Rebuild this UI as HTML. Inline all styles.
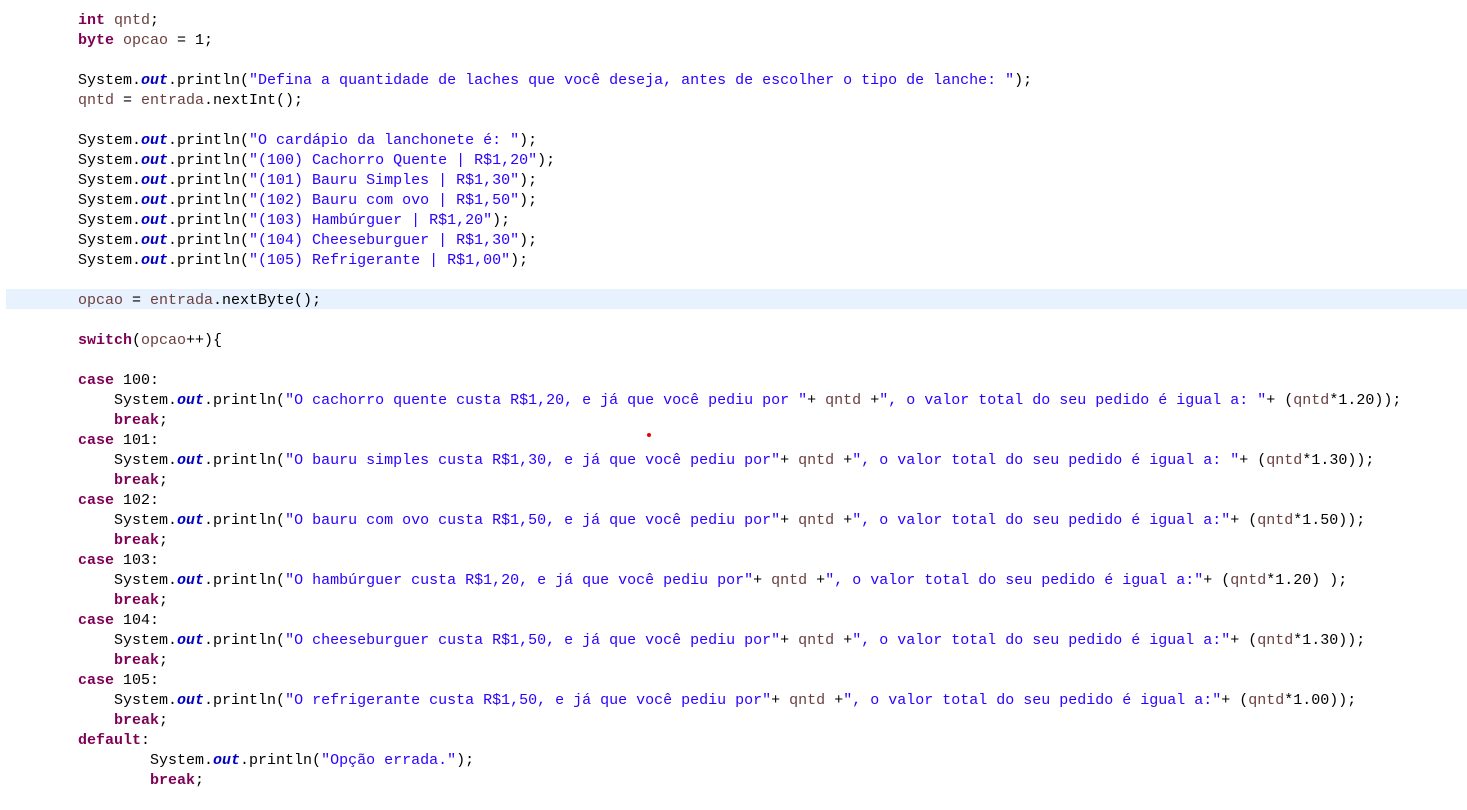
<!DOCTYPE html>
<html><head><meta charset="utf-8"><style>
html,body{margin:0;padding:0;background:#fff;width:1467px;height:810px;overflow:hidden}
.hl{position:absolute;left:6px;top:289px;width:1461px;height:20px;background:#e8f2fe}
pre{position:absolute;left:78px;top:11px;margin:0;font-family:"Liberation Mono",monospace;font-size:15px;line-height:20px;color:#000}
.k{color:#7f0055;font-weight:bold}
.s{color:#2a00ff}
.o{color:#0000c0;font-weight:bold;font-style:italic}
.v{color:#6a3e3e}
.dot{position:absolute;left:647px;top:433px;width:4px;height:4px;border-radius:50%;background:#e00}
</style></head><body>
<div class="hl"></div>
<div class="dot"></div>
<pre><span class="k">int</span> <span class="v">qntd</span>;
<span class="k">byte</span> <span class="v">opcao</span> = 1;

System.<span class="o">out</span>.println(<span class="s">"Defina a quantidade de laches que você deseja, antes de escolher o tipo de lanche: "</span>);
<span class="v">qntd</span> = <span class="v">entrada</span>.nextInt();

System.<span class="o">out</span>.println(<span class="s">"O cardápio da lanchonete é: "</span>);
System.<span class="o">out</span>.println(<span class="s">"(100) Cachorro Quente | R$1,20"</span>);
System.<span class="o">out</span>.println(<span class="s">"(101) Bauru Simples | R$1,30"</span>);
System.<span class="o">out</span>.println(<span class="s">"(102) Bauru com ovo | R$1,50"</span>);
System.<span class="o">out</span>.println(<span class="s">"(103) Hambúrguer | R$1,20"</span>);
System.<span class="o">out</span>.println(<span class="s">"(104) Cheeseburguer | R$1,30"</span>);
System.<span class="o">out</span>.println(<span class="s">"(105) Refrigerante | R$1,00"</span>);

<span class="v">opcao</span> = <span class="v">entrada</span>.nextByte();

<span class="k">switch</span>(<span class="v">opcao</span>++){

<span class="k">case</span> 100:
    System.<span class="o">out</span>.println(<span class="s">"O cachorro quente custa R$1,20, e já que você pediu por "</span>+ <span class="v">qntd</span> +<span class="s">", o valor total do seu pedido é igual a: "</span>+ (<span class="v">qntd</span>*1.20));
    <span class="k">break</span>;
<span class="k">case</span> 101:
    System.<span class="o">out</span>.println(<span class="s">"O bauru simples custa R$1,30, e já que você pediu por"</span>+ <span class="v">qntd</span> +<span class="s">", o valor total do seu pedido é igual a: "</span>+ (<span class="v">qntd</span>*1.30));
    <span class="k">break</span>;
<span class="k">case</span> 102:
    System.<span class="o">out</span>.println(<span class="s">"O bauru com ovo custa R$1,50, e já que você pediu por"</span>+ <span class="v">qntd</span> +<span class="s">", o valor total do seu pedido é igual a:"</span>+ (<span class="v">qntd</span>*1.50));
    <span class="k">break</span>;
<span class="k">case</span> 103:
    System.<span class="o">out</span>.println(<span class="s">"O hambúrguer custa R$1,20, e já que você pediu por"</span>+ <span class="v">qntd</span> +<span class="s">", o valor total do seu pedido é igual a:"</span>+ (<span class="v">qntd</span>*1.20) );
    <span class="k">break</span>;
<span class="k">case</span> 104:
    System.<span class="o">out</span>.println(<span class="s">"O cheeseburguer custa R$1,50, e já que você pediu por"</span>+ <span class="v">qntd</span> +<span class="s">", o valor total do seu pedido é igual a:"</span>+ (<span class="v">qntd</span>*1.30));
    <span class="k">break</span>;
<span class="k">case</span> 105:
    System.<span class="o">out</span>.println(<span class="s">"O refrigerante custa R$1,50, e já que você pediu por"</span>+ <span class="v">qntd</span> +<span class="s">", o valor total do seu pedido é igual a:"</span>+ (<span class="v">qntd</span>*1.00));
    <span class="k">break</span>;
<span class="k">default</span>:
        System.<span class="o">out</span>.println(<span class="s">"Opção errada."</span>);
        <span class="k">break</span>;
</pre>
</body></html>
